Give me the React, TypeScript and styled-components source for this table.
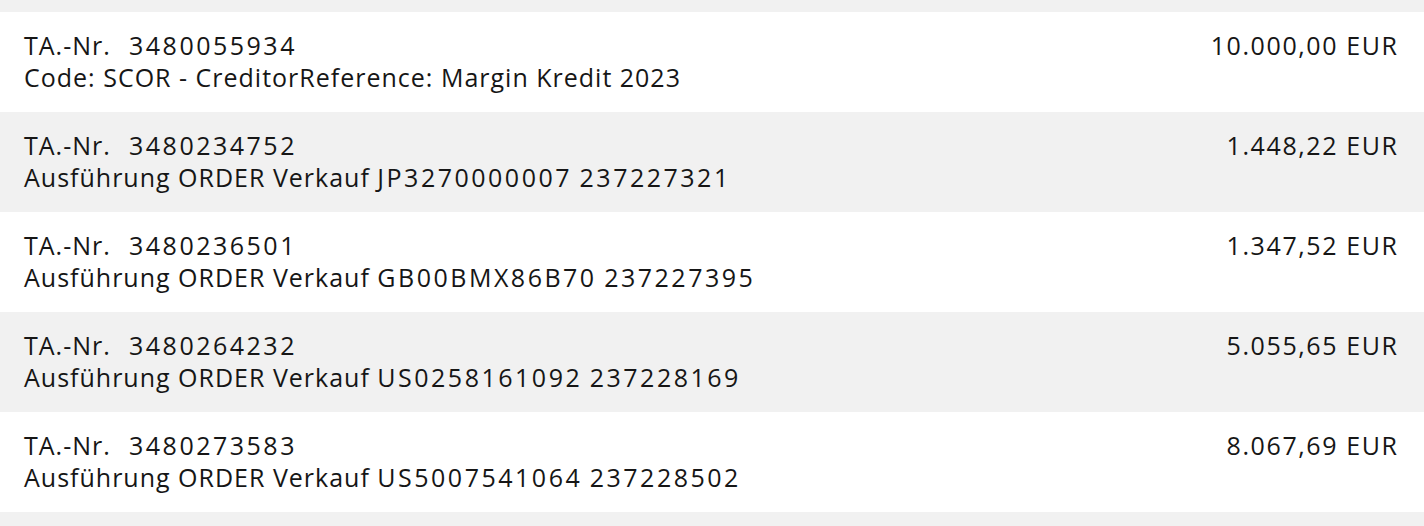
import styled, { createGlobalStyle } from 'styled-components';

const GlobalStyle = createGlobalStyle`
  html, body {
    margin: 0;
    padding: 0;
    background: #f1f1f1;
  }
`;

const List = styled.div`
  padding: 12px 0;
  font-family: 'Open Sans', Lato, sans-serif;
  color: #161616;
  font-size: 25px;
  line-height: 32px;
  letter-spacing: 1px;
`;

const Row = styled.div<{ $shaded: boolean }>`
  display: flex;
  justify-content: space-between;
  align-items: flex-start;
  height: 100px;
  box-sizing: border-box;
  padding: 17px 27px 0 24px;
  background: ${({ $shaded }) => ($shaded ? '#f1f1f1' : '#ffffff')};
`;

const Details = styled.div`
  display: flex;
  flex-direction: column;
`;

const Label = styled.span`
  display: inline-block;
  width: 105px;
`;

// digits in the original are wider than in Open Sans
const Digits = styled.span`
  letter-spacing: 2.5px;
`;

const Amount = styled.div`
  text-align: right;
  white-space: nowrap;
  letter-spacing: 1.6px;
  margin-right: -1.6px;
`;

type Entry = { nr: string; text: string; refs: string[]; amount: string };

const rows: Entry[] = [
  { nr: '3480055934', text: 'Code: SCOR - CreditorReference: Margin Kredit 2023', refs: [], amount: '10.000,00 EUR' },
  { nr: '3480234752', text: 'Ausführung ORDER Verkauf', refs: ['JP3270000007', '237227321'], amount: '1.448,22 EUR' },
  { nr: '3480236501', text: 'Ausführung ORDER Verkauf', refs: ['GB00BMX86B70', '237227395'], amount: '1.347,52 EUR' },
  { nr: '3480264232', text: 'Ausführung ORDER Verkauf', refs: ['US0258161092', '237228169'], amount: '5.055,65 EUR' },
  { nr: '3480273583', text: 'Ausführung ORDER Verkauf', refs: ['US5007541064', '237228502'], amount: '8.067,69 EUR' },
];

export default function App() {
  return (
    <>
      <GlobalStyle />
      <List>
        {rows.map((r, i) => (
          <Row key={r.nr} $shaded={i % 2 === 1}>
            <Details>
              <div>
                <Label>TA.-Nr.</Label>
                <Digits>{r.nr}</Digits>
              </div>
              <div>
                {r.text}
                {r.refs.map((ref) => (
                  <span key={ref}>
                    {' '}
                    <Digits>{ref}</Digits>
                  </span>
                ))}
              </div>
            </Details>
            <Amount>{r.amount}</Amount>
          </Row>
        ))}
      </List>
    </>
  );
}
